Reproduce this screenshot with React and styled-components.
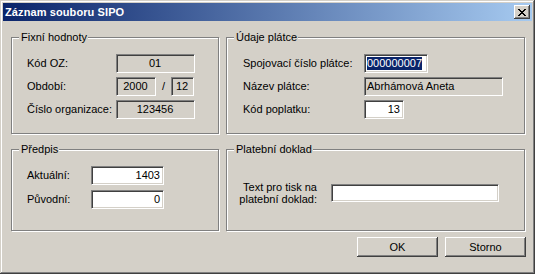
import React from "react";
import styled, { createGlobalStyle } from "styled-components";

const Global = createGlobalStyle`
  html, body { margin: 0; padding: 0; background: #d4d0c8; }
  body { font-family: "Liberation Sans", Arial, sans-serif; font-size: 11px; color: #000; }
`;

const Window = styled.div`
  width: 535px;
  height: 274px;
  box-sizing: border-box;
  background: #d4d0c8;
  padding: 3px;
  display: flex;
  flex-direction: column;
  box-shadow: inset -1px -1px #404040, inset 1px 1px #d4d0c8,
    inset -2px -2px #808080, inset 2px 2px #fff;
`;

const TitleBar = styled.div`
  height: 18px;
  flex: none;
  display: flex;
  align-items: center;
  justify-content: space-between;
  padding: 0 2px 0 2px;
  background: linear-gradient(to right, #0a246a, #a6caf0);
`;

const Title = styled.span`
  color: #fff;
  font-weight: bold;
  font-size: 11px;
  letter-spacing: 0.1px;
`;

const CloseButton = styled.div`
  width: 16px;
  height: 14px;
  box-sizing: border-box;
  background: #d4d0c8;
  display: flex;
  align-items: center;
  justify-content: center;
  box-shadow: inset -1px -1px #404040, inset 1px 1px #fff,
    inset -2px -2px #808080;
`;

const Body = styled.div`
  padding: 16px 0 0 8px;
  display: flex;
  flex-direction: column;
`;

const Grid = styled.div`
  display: grid;
  grid-template-columns: 208px 299px;
  grid-template-rows: 97px 82px;
  column-gap: 7px;
  row-gap: 15px;
`;

const Group = styled.div`
  border: 1px solid #808080;
  box-shadow: inset 1px 1px #fff, 1px 1px #fff;
  box-sizing: border-box;
  display: flex;
  flex-direction: column;
`;

const Legend = styled.div`
  margin: -7px 0 0 7px;
  padding: 0 1px 0 2px;
  line-height: 13px;
  width: fit-content;
  background: #d4d0c8;
`;

const Rows = styled.div`
  margin-top: ${(p) => p.$top || 10}px;
  padding-left: ${(p) => p.$left || 15}px;
  display: grid;
  grid-template-columns: ${(p) => p.$label}px auto;
  row-gap: ${(p) => p.$gap || 4}px;
  align-items: center;
  justify-items: start;
`;

const Label = styled.span`
  line-height: 13px;
  white-space: nowrap;
`;

const MultiLabel = styled.div`
  width: 74px;
  margin-right: 14px;
  display: flex;
  flex-direction: column;
  align-items: flex-end;
  line-height: 12px;
  white-space: nowrap;
`;

const Field = styled.div`
  width: ${(p) => p.$w}px;
  height: ${(p) => p.$h || 19}px;
  box-sizing: border-box;
  background: ${(p) => (p.$readOnly ? "#d4d0c8" : "#fff")};
  border-style: solid;
  border-width: 1px;
  border-color: #808080 #fff #fff #808080;
  box-shadow: inset 1px 1px #404040, inset -1px -1px #d4d0c8;
  display: flex;
  align-items: center;
  justify-content: ${(p) =>
    p.$align === "right" ? "flex-end" : p.$align === "left" ? "flex-start" : "center"};
  padding: 0 3px 0 2px;
  line-height: 13px;
  white-space: nowrap;
  overflow: hidden;
`;

const Selected = styled.span`
  background: #0a246a;
  color: #fff;
`;

const Pair = styled.div`
  display: flex;
  align-items: center;
  gap: 6px;
`;

const Slash = styled.span`
  line-height: 13px;
`;

const InlineRow = styled.div`
  margin-top: 25px;
  padding-left: 16px;
  display: flex;
  align-items: center;
`;

const ButtonRow = styled.div`
  display: flex;
  justify-content: flex-end;
  gap: 7px;
  margin-top: 6px;
  padding-right: 6px;
`;

const Button = styled.div`
  width: 81px;
  height: 20px;
  box-sizing: border-box;
  display: flex;
  align-items: center;
  justify-content: center;
  background: #d4d0c8;
  box-shadow: inset -1px -1px #404040, inset 1px 1px #fff,
    inset -2px -2px #808080;
`;

export default function App() {
  return (
    <>
      <Global />
      <Window>
        <TitleBar>
          <Title>Záznam souboru SIPO</Title>
          <CloseButton>
            <svg width="8" height="7" viewBox="0 0 8 7" shapeRendering="crispEdges">
              <path
                d="M0 0h2v1H0zM6 0h2v1H6zM1 1h2v1H1zM5 1h2v1H5zM2 2h4v1H2zM3 3h2v1H3zM2 4h4v1H2zM1 5h2v1H1zM5 5h2v1H5zM0 6h2v1H0zM6 6h2v1H6z"
                fill="#000"
              />
            </svg>
          </CloseButton>
        </TitleBar>
        <Body>
          <Grid>
            <Group>
              <Legend>Fixní hodnoty</Legend>
              <Rows $label={89} $gap={4}>
                <Label>Kód OZ:</Label>
                <Field $w={79} $readOnly>01</Field>
                <Label>Období:</Label>
                <Pair>
                  <Field $w={40} $readOnly>2000</Field>
                  <Slash>/</Slash>
                  <Field $w={23} $readOnly>12</Field>
                </Pair>
                <Label>Číslo organizace:</Label>
                <Field $w={79} $readOnly>123456</Field>
              </Rows>
            </Group>
            <Group>
              <Legend>Údaje plátce</Legend>
              <Rows $label={121} $left={16} $gap={4}>
                <Label>Spojovací číslo plátce:</Label>
                <Field $w={64} $align="left">
                  <Selected>000000007</Selected>
                </Field>
                <Label>Název plátce:</Label>
                <Field $w={139} $readOnly $align="left">Abrhámová Aneta</Field>
                <Label>Kód poplatku:</Label>
                <Field $w={40} $align="right">13</Field>
              </Rows>
            </Group>
            <Group>
              <Legend>Předpis</Legend>
              <Rows $label={64} $gap={5}>
                <Label>Aktuální:</Label>
                <Field $w={73} $align="right">1403</Field>
                <Label>Původní:</Label>
                <Field $w={73} $align="right">0</Field>
              </Rows>
            </Group>
            <Group>
              <Legend>Platební doklad</Legend>
              <InlineRow>
                <MultiLabel>
                  <span>Text pro tisk na</span>
                  <span>platební doklad:</span>
                </MultiLabel>
                <Field $w={168} $h={18} />
              </InlineRow>
            </Group>
          </Grid>
          <ButtonRow>
            <Button>OK</Button>
            <Button>Storno</Button>
          </ButtonRow>
        </Body>
      </Window>
    </>
  );
}
